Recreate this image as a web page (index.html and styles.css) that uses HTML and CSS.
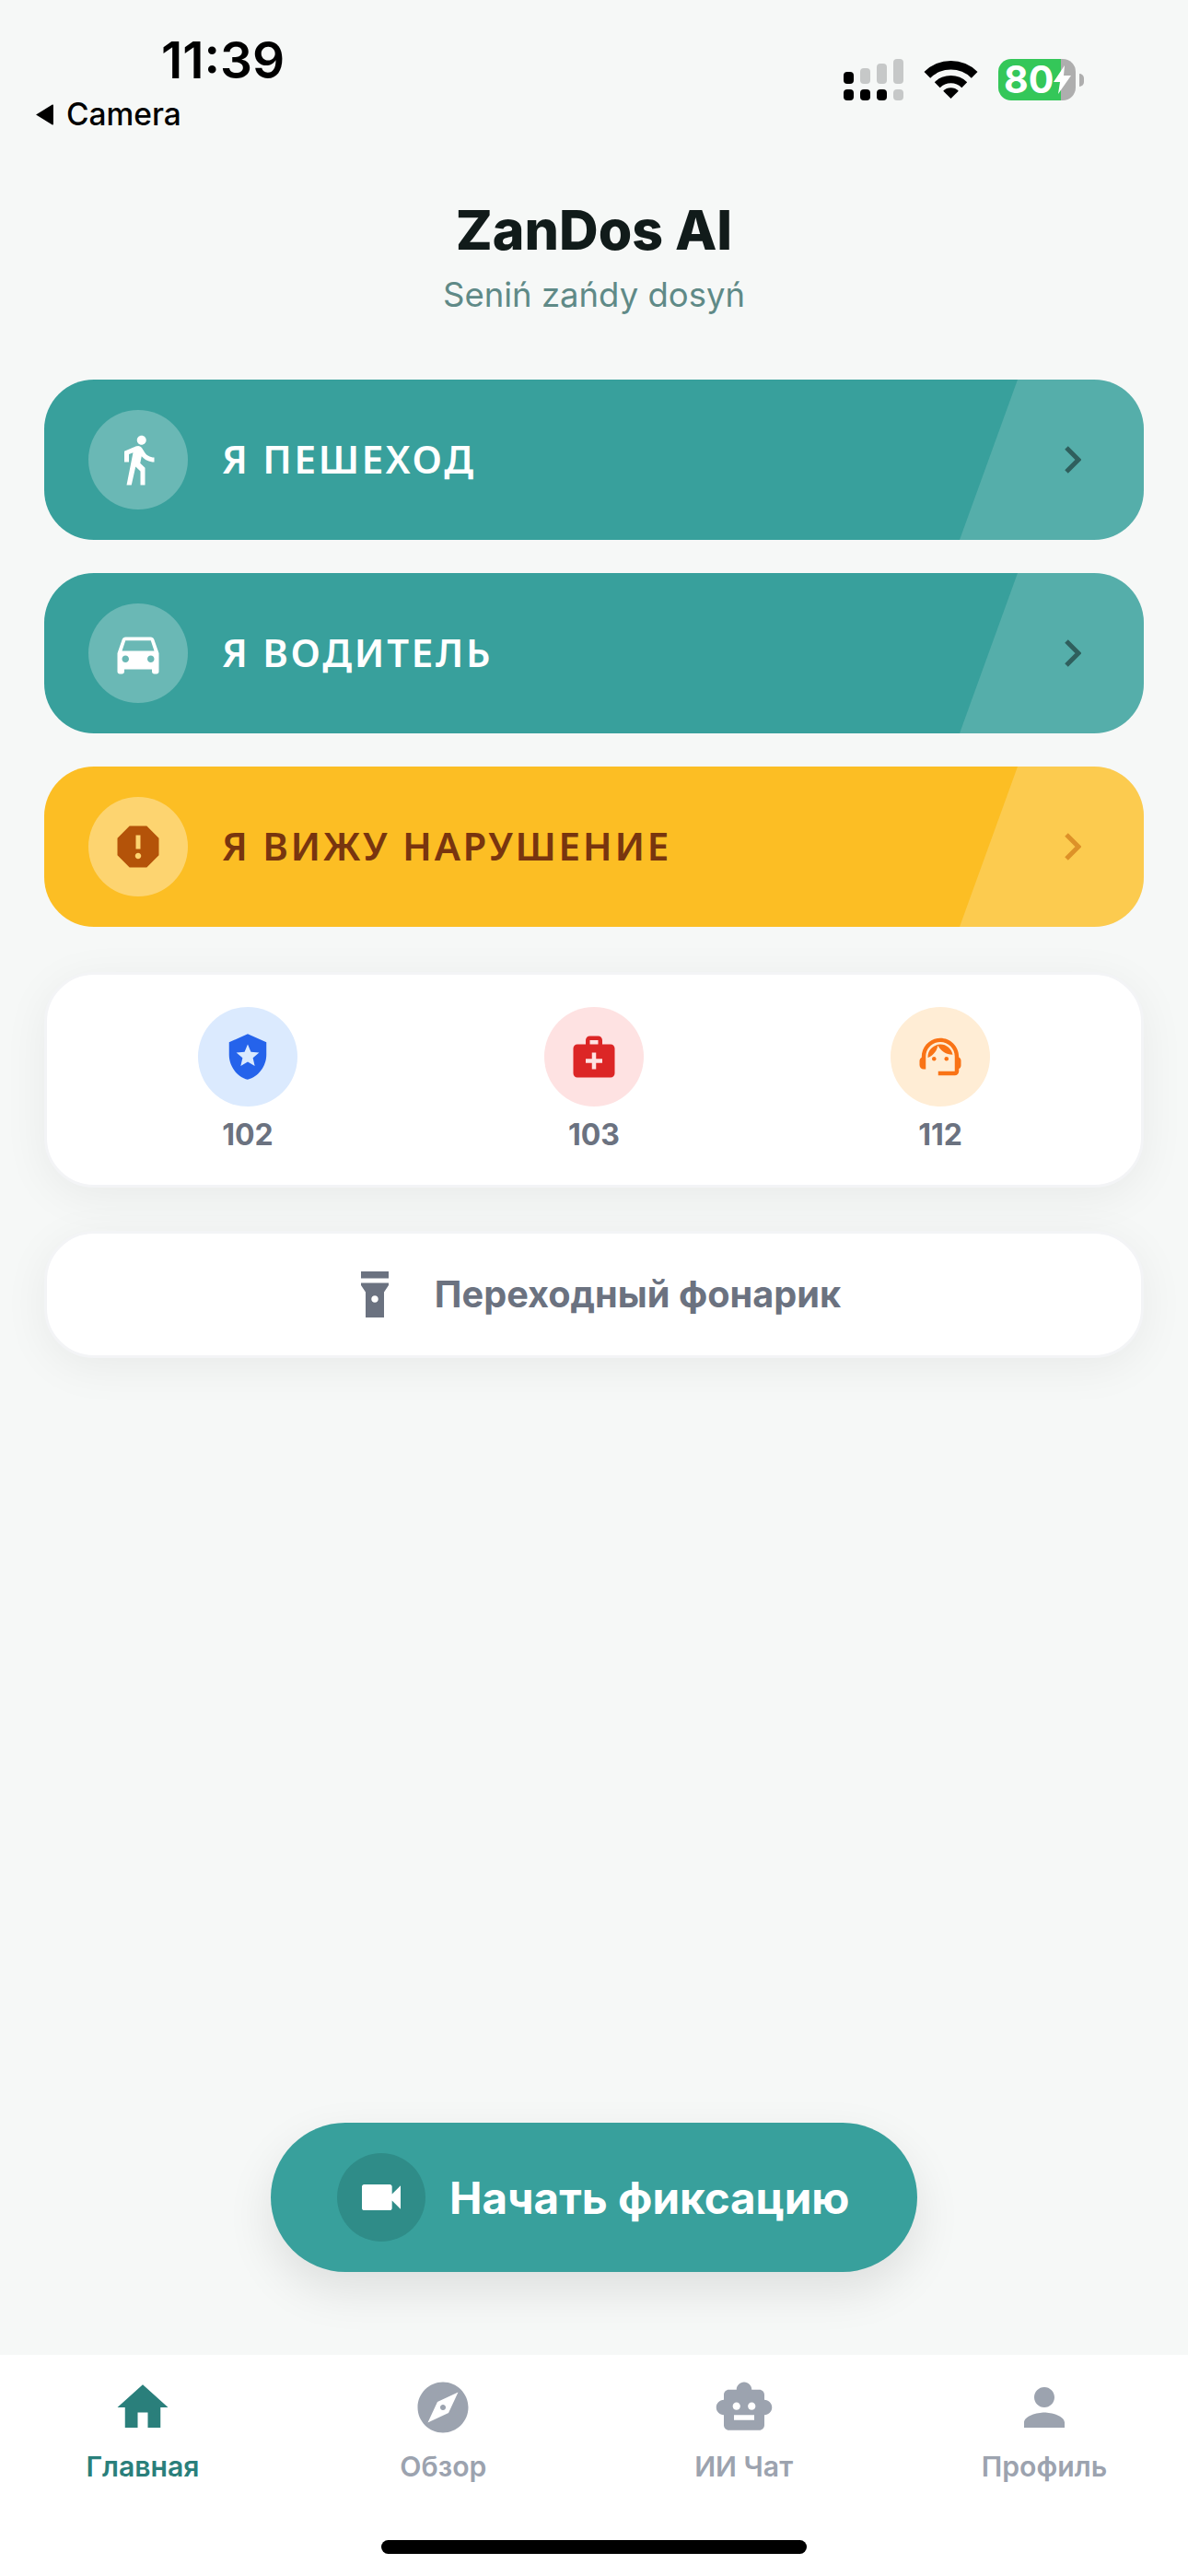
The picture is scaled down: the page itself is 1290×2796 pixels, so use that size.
FILE: index.html
```html
<!DOCTYPE html>
<html lang="ru">
<head>
    <meta charset="UTF-8">
    <meta name="viewport" content="width=device-width, initial-scale=1.0">
    <title>ZanDos AI</title>
    <link rel="stylesheet" href="styles.css">
</head>
<body>
    <div class="page">
        <!-- Status bar -->
        <div class="status-bar">
            <div class="status-left">
                <div class="status-time">11:39</div>
                <div class="status-back">
                    <svg class="back-arrow" viewBox="0 0 18 22"><path d="M0 11L17 0.5c.6-.3 1 0 1 .6v19.800c0 .6-.4.9-1 .6z"/></svg>
                    <span>Camera</span>
                </div>
            </div>
            <div class="status-right">
                <svg class="signal" viewBox="0 0 65 45">
                    <rect x="0" y="14" width="11" height="13" rx="4"/>
                    <rect class="off" x="18" y="10" width="11" height="17" rx="4"/>
                    <rect class="off" x="36" y="5" width="11" height="22" rx="4"/>
                    <rect class="off" x="54" y="0" width="11" height="27" rx="4"/>
                    <rect x="0" y="33" width="11" height="12" rx="4"/>
                    <rect x="18" y="33" width="11" height="12" rx="4"/>
                    <rect x="36" y="33" width="11" height="12" rx="4"/>
                    <rect class="off" x="54" y="33" width="11" height="12" rx="4"/>
                </svg>
                <svg class="wifi" viewBox="0 0 57 41">
                    <path d="M-.5 12A41 41 0 0 1 57.500 12L50.800 18.700A31.500 31.500 0 0 0 6.200 18.700Z"/>
                    <path d="M10.800 23.300A25 25 0 0 1 46.200 23.300L40.300 29.200A16.700 16.700 0 0 0 16.700 29.200Z"/>
                    <path d="M20.200 32.700A11.700 11.700 0 0 1 36.800 32.700L28.500 41Z"/>
                </svg>
                <div class="battery">
                    <div class="battery-body">
                        <span class="battery-level">80</span>
                        <svg class="battery-bolt" viewBox="0 0 19 31"><path d="M12 0L0 18h7L5 31 19 11h-8z"/></svg>
                    </div>
                    <div class="battery-nub"></div>
                </div>
            </div>
        </div>

        <div class="main">
            <div class="app-header">
                <h1>ZanDos AI</h1>
                <p>Seniń zańdy dosyń</p>
            </div>

            <div class="role-list">
                <div class="role-card">
                    <div class="role-icon">
                        <svg viewBox="0 0 24 24"><path d="M13.500 5.500c1.100 0 2-.9 2-2s-.9-2-2-2-2 .9-2 2 .9 2 2 2zM9.800 8.900L7 23h2.100l1.800-8 2.100 2v6h2v-7.500l-2.100-2 .6-3C14.800 12 16.800 13 19 13v-2c-1.900 0-3.500-1-4.300-2.400l-1-1.600c-.4-.6-1-1-1.700-1-.3 0-.5.1-.8.1L6 8.300V13h2V9.600l1.800-.7"/></svg>
                    </div>
                    <span class="role-title">Я ПЕШЕХОД</span>
                    <svg class="role-arrow" viewBox="0 0 18 30"><path d="M2 2l13 13L2 28"/></svg>
                </div>
                <div class="role-card">
                    <div class="role-icon">
                        <svg viewBox="0 0 24 24"><path d="M18.920 6.010C18.720 5.420 18.160 5 17.500 5h-11c-.66 0-1.210.42-1.420 1.010L3 12v8c0 .55.45 1 1 1h1c.55 0 1-.45 1-1v-1h12v1c0 .55.45 1 1 1h1c.55 0 1-.45 1-1v-8l-2.080-5.990zM6.500 16c-.83 0-1.500-.67-1.500-1.500S5.670 13 6.500 13s1.500.67 1.500 1.500S7.330 16 6.500 16zm11 0c-.83 0-1.500-.67-1.500-1.500s.67-1.500 1.500-1.500 1.500.67 1.500 1.500-.67 1.500-1.500 1.500zM5 11l1.500-4.500h11L19 11H5z"/></svg>
                    </div>
                    <span class="role-title">Я ВОДИТЕЛЬ</span>
                    <svg class="role-arrow" viewBox="0 0 18 30"><path d="M2 2l13 13L2 28"/></svg>
                </div>
                <div class="role-card warning">
                    <div class="role-icon">
                        <svg viewBox="0 0 24 24"><path d="M15.730 3H8.270L3 8.270v7.460L8.270 21h7.460L21 15.730V8.270L15.730 3zM12 17.300c-.72 0-1.300-.58-1.300-1.300 0-.72.58-1.300 1.300-1.300.72 0 1.300.58 1.300 1.300 0 .72-.58 1.300-1.300 1.300zm1-4.300h-2V7h2v6z"/></svg>
                    </div>
                    <span class="role-title">Я ВИЖУ НАРУШЕНИЕ</span>
                    <svg class="role-arrow" viewBox="0 0 18 30"><path d="M2 2l13 13L2 28"/></svg>
                </div>
            </div>

            <div class="panel call-panel">
                <div class="call-item">
                    <div class="call-icon police">
                        <svg viewBox="0 0 24 24"><path d="M12 1L3 5v6c0 5.550 3.840 10.740 9 12 5.160-1.260 9-6.450 9-12V5l-9-4zm2.500 11.590l.9 3.880L12 14.420l-3.400 2.050.9-3.870-3-2.590 3.960-.34L12 6.020l1.540 3.640 3.960.34-3 2.590z"/></svg>
                    </div>
                    <span>102</span>
                </div>
                <div class="call-item">
                    <div class="call-icon medic">
                        <svg viewBox="0 0 24 24"><path d="M20 6h-4V4c0-1.100-.9-2-2-2h-4c-1.100 0-2 .9-2 2v2H4c-1.100 0-2 .9-2 2v12c0 1.100.9 2 2 2h16c1.100 0 2-.9 2-2V8c0-1.100-.9-2-2-2zM10 4h4v2h-4V4zm6 11h-3v3h-2v-3H8v-2h3v-3h2v3h3v2z"/></svg>
                    </div>
                    <span>103</span>
                </div>
                <div class="call-item">
                    <div class="call-icon rescue">
                        <svg viewBox="0 0 24 24"><path d="M21 12.220C21 6.730 16.740 3 12 3c-4.690 0-9 3.650-9 9.280-.6.34-1 .98-1 1.720v2c0 1.100.9 2 2 2h1v-6.100c0-3.870 3.130-7 7-7s7 3.130 7 7V19h-8v2h8c1.100 0 2-.9 2-2v-1.220c.59-.31 1-.92 1-1.610v-2.300c0-.67-.41-1.280-1-1.650z"/><circle cx="9" cy="13" r="1"/><circle cx="15" cy="13" r="1"/><path d="M18 11.030C17.520 8.180 15.040 6 12.050 6c-3.030 0-6.290 2.510-6.030 6.450 2.470-1.010 4.330-3.210 4.860-5.890 1.310 2.630 4 4.440 7.120 4.470z"/></svg>
                    </div>
                    <span>112</span>
                </div>
            </div>

            <div class="panel torch-panel">
                <svg class="torch-icon" viewBox="0 0 24 24"><path d="M6 2h12v3H6zm0 5v1l2 3v11h8V11l2-3V7H6zm6 8.500c-.83 0-1.500-.67-1.500-1.500s.67-1.500 1.500-1.500 1.500.67 1.500 1.500-.67 1.500-1.500 1.500z"/></svg>
                <span>Переходный фонарик</span>
            </div>

            <div class="record-wrap">
                <div class="record-btn">
                    <div class="record-icon">
                        <svg viewBox="0 0 24 24"><path d="M17 10.500V7c0-.55-.45-1-1-1H4c-.55 0-1 .45-1 1v10c0 .55.45 1 1 1h12c.55 0 1-.45 1-1v-3.500l4 4v-11l-4 4z"/></svg>
                    </div>
                    <span>Начать фиксацию</span>
                </div>
            </div>
        </div>

        <!-- Bottom nav -->
        <div class="bottom-nav">
            <div class="nav-items">
                <div class="nav-item active">
                    <svg viewBox="0 0 24 24"><path d="M10 20v-6h4v6h5v-8h3L12 3 2 12h3v8z"/></svg>
                    <span>Главная</span>
                </div>
                <div class="nav-item">
                    <svg viewBox="0 0 24 24"><path d="M12 10.900c-.61 0-1.100.49-1.100 1.100s.49 1.100 1.100 1.100c.61 0 1.100-.49 1.100-1.100s-.49-1.100-1.100-1.100zM12 2C6.480 2 2 6.480 2 12s4.480 10 10 10 10-4.480 10-10S17.520 2 12 2zm2.190 12.190L6 18l3.810-8.190L18 6l-3.810 8.190z"/></svg>
                    <span>Обзор</span>
                </div>
                <div class="nav-item">
                    <svg viewBox="0 0 24 24"><path d="M20 9V7c0-1.100-.9-2-2-2h-3c0-1.660-1.340-3-3-3S9 3.340 9 5H6c-1.100 0-2 .9-2 2v2c-1.660 0-3 1.340-3 3s1.340 3 3 3v4c0 1.100.9 2 2 2h12c1.100 0 2-.9 2-2v-4c1.660 0 3-1.340 3-3s-1.340-3-3-3zM7.500 11.500C7.500 10.670 8.170 10 9 10s1.500.67 1.500 1.500S9.830 13 9 13s-1.500-.67-1.500-1.500zM16 17H8v-2h8v2zm-1-4c-.83 0-1.500-.67-1.500-1.500S14.170 10 15 10s1.500.67 1.500 1.500S15.830 13 15 13z"/></svg>
                    <span>ИИ Чат</span>
                </div>
                <div class="nav-item">
                    <svg viewBox="0 0 24 24"><path d="M12 12c2.210 0 4-1.790 4-4s-1.790-4-4-4-4 1.790-4 4 1.790 4 4 4zm0 2c-2.670 0-8 1.340-8 4v2h16v-2c0-2.660-5.330-4-8-4z"/></svg>
                    <span>Профиль</span>
                </div>
            </div>
            <div class="home-bar"></div>
        </div>
    </div>
</body>
</html>
```
FILE: styles.css
```css
* {
    box-sizing: border-box;
}

body {
    margin: 0;
    font-family: Inter, "Noto Sans", sans-serif;
    background: #f6f8f7;
}

.page {
    display: flex;
    flex-direction: column;
    width: 1290px;
    height: 2796px;
}

/* Status bar */
.status-bar {
    display: flex;
    justify-content: space-between;
    height: 150px;
    padding: 40px 113px 0 37px;
    color: #000;
}

.status-time {
    margin-left: 138px;
    font-size: 55px;
    font-weight: 600;
    line-height: 50px;
}

.status-back {
    display: flex;
    align-items: center;
    gap: 12px;
    margin-top: 16px;
    font-size: 33.5px;
    font-weight: 500;
    line-height: 36px;
}

.back-arrow {
    width: 23px;
    height: 23px;
}

.status-right {
    display: flex;
    align-items: flex-start;
    padding-top: 24px;
}

.signal {
    width: 65px;
    height: 45px;
    margin-right: 23px;
}

.signal .off {
    fill: #c6c8c8;
}

.wifi {
    width: 57px;
    height: 41px;
    margin-top: 2px;
    margin-right: 23px;
    overflow: visible;
}

.battery {
    display: flex;
    align-items: center;
    gap: 4px;
}

.battery-body {
    display: flex;
    align-items: center;
    width: 84px;
    height: 45px;
    padding-left: 6px;
    border-radius: 14px;
    background: linear-gradient(90deg, #34c759 81%, #aeaeae 81%);
    color: #fff;
}

.battery-level {
    font-size: 41px;
    font-weight: 700;
    line-height: 45px;
}

.battery-bolt {
    width: 19px;
    height: 31px;
    fill: #fff;
}

.battery-nub {
    width: 5px;
    height: 14px;
    border-radius: 0 7px 7px 0;
    background: #aeaeae;
}

/* Main */
.main {
    display: flex;
    flex: 1;
    flex-direction: column;
    padding: 65px 48px 0;
}

.app-header {
    text-align: center;
    margin-bottom: 70px;
}

.app-header h1 {
    margin: 0;
    color: #111b1a;
    font-size: 59px;
    font-weight: 800;
    line-height: 70px;
}

.app-header p {
    margin: 13px 0 0;
    color: #5f8a87;
    font-size: 36.500px;
    line-height: 44px;
}

.role-list {
    display: flex;
    flex-direction: column;
    gap: 36px;
}

.role-card {
    position: relative;
    display: flex;
    align-items: center;
    height: 174px;
    padding: 0 48px;
    border-radius: 54px;
    overflow: hidden;
    background: #38a09c;
    color: #fff;
}

.role-card::after {
    content: "";
    position: absolute;
    top: 0;
    right: 0;
    bottom: 0;
    width: 200px;
    background: rgba(255, 255, 255, 0.15);
    clip-path: polygon(63px 0, 100% 0, 100% 100%, 0 100%);
}

.role-icon {
    display: flex;
    align-items: center;
    justify-content: center;
    width: 108px;
    height: 108px;
    border-radius: 50%;
    background: rgba(255, 255, 255, 0.25);
}

.role-icon svg {
    width: 60px;
    height: 60px;
    fill: #fff;
}

.role-title {
    margin-top: -3px;
    margin-left: 37px;
    font-family: "Noto Sans", sans-serif;
    font-size: 42px;
    font-weight: 650;
    letter-spacing: 2.7px;
}

.role-arrow {
    position: relative;
    z-index: 1;
    width: 18px;
    height: 30px;
    margin-left: auto;
    margin-right: 20px;
    fill: none;
    stroke: #2f5f5d;
    stroke-width: 5;
}

.role-card.warning {
    background: #fcbe24;
    color: #78350f;
}

.role-card.warning::after {
    background: rgba(255, 255, 255, 0.2);
}

.role-card.warning .role-icon {
    background: rgba(255, 255, 255, 0.35);
}

.role-card.warning .role-icon svg {
    fill: #b45309;
}

.role-card.warning .role-arrow {
    stroke: #dd9128;
}

.panel {
    border: 3px solid #f3f4f6;
    border-radius: 54px;
    background: #fff;
    box-shadow: 0 10px 50px rgba(0, 0, 0, 0.06);
}

.call-panel {
    display: grid;
    grid-template-columns: repeat(3, 1fr);
    height: 234px;
    margin-top: 49px;
    padding: 35px 30px 0;
}

.call-item {
    display: flex;
    flex-direction: column;
    align-items: center;
    color: #6b7280;
    font-size: 32px;
    font-weight: 650;
    line-height: 36px;
}

.call-item span {
    margin-top: 13px;
}

.call-icon {
    display: flex;
    align-items: center;
    justify-content: center;
    width: 108px;
    height: 108px;
    border-radius: 50%;
}

.call-icon svg {
    width: 54px;
    height: 54px;
}

.call-icon.police {
    background: #dbeafe;
    fill: #2563eb;
}

.call-icon.medic {
    background: #fee2e2;
    fill: #dc2626;
}

.call-icon.rescue {
    background: #ffedd5;
    fill: #f97316;
}

.torch-panel {
    display: flex;
    align-items: center;
    justify-content: center;
    gap: 35px;
    height: 138px;
    margin-top: 47px;
    color: #6b7280;
    font-size: 39.700px;
    font-weight: 650;
}

.torch-icon {
    width: 60px;
    height: 60px;
    fill: #6b7280;
}

.record-wrap {
    display: flex;
    justify-content: center;
    margin-top: auto;
    padding-bottom: 90px;
}

.record-btn {
    display: flex;
    align-items: center;
    gap: 26px;
    width: 702px;
    height: 162px;
    padding-left: 72px;
    border-radius: 81px;
    background: #38a09c;
    box-shadow: 0 20px 50px rgba(0, 0, 0, 0.1);
    color: #fff;
    font-size: 47.500px;
    font-weight: 650;
}

.record-icon {
    display: flex;
    align-items: center;
    justify-content: center;
    width: 96px;
    height: 96px;
    border-radius: 50%;
    background: #2f8c88;
}

.record-icon svg {
    width: 56px;
    height: 56px;
    fill: #fff;
}

/* Bottom nav */
.bottom-nav {
    height: 240px;
    background: #fff;
}

.nav-items {
    display: flex;
    justify-content: space-between;
    padding: 24px 66px 0 65px;
}

.nav-item {
    display: flex;
    flex-direction: column;
    align-items: center;
    width: 180px;
    color: #9ca3af;
    fill: #9ca3af;
    font-size: 30.200px;
    font-weight: 600;
    line-height: 36px;
}

.nav-item svg {
    width: 66px;
    height: 66px;
}

.nav-item span {
    margin-top: 13px;
}

.nav-item.active {
    color: #2a7f7b;
    fill: #2a7f7b;
}

.home-bar {
    width: 462px;
    height: 15px;
    margin: 62px auto 0;
    border-radius: 8px;
    background: #000;
}
```
